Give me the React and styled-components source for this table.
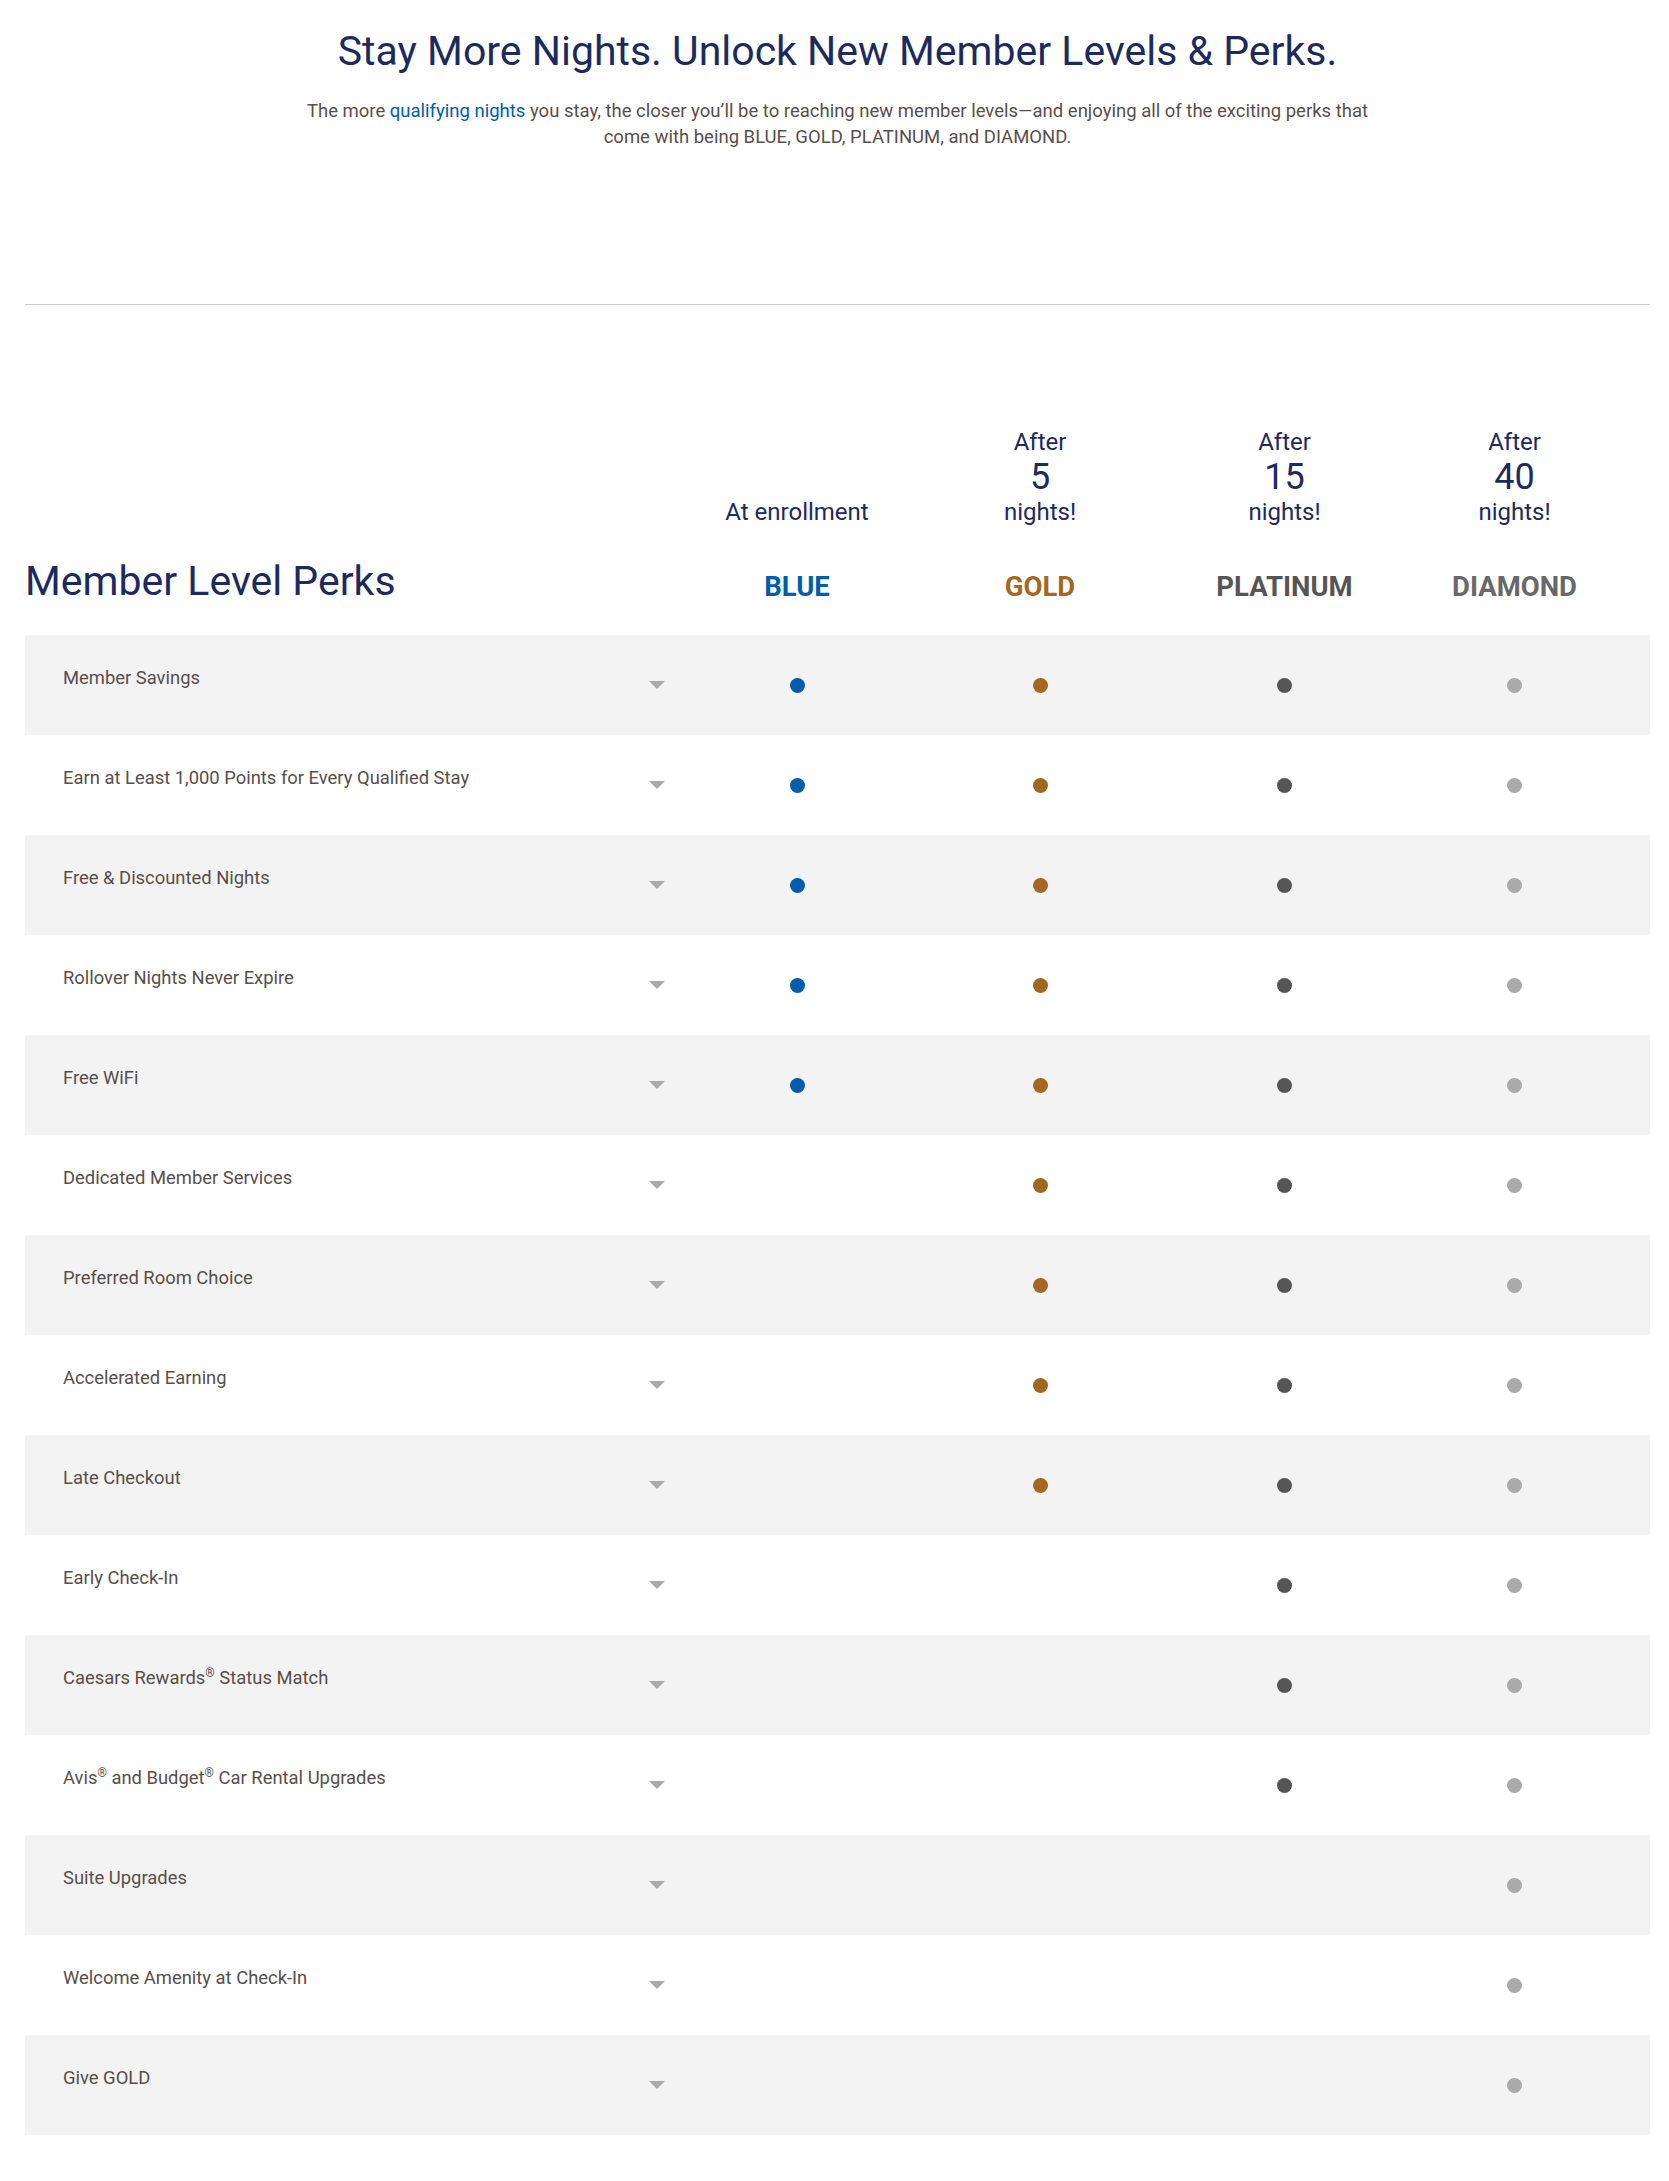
import React from "react";
import styled, { createGlobalStyle } from "styled-components";

const GlobalStyle = createGlobalStyle`
  html, body { margin: 0; padding: 0; background: #ffffff; }
  body { font-family: Roboto, "Open Sans", Arial, sans-serif; }
  * { box-sizing: border-box; }
`;

const NAVY = "#1d2a5e";
const TEXT = "#574f4b";

const Page = styled.div`
  width: 1625px;
  margin-left: 25px;
  padding: 26px 0 46px;
`;

const Intro = styled.header`
  display: flex;
  flex-direction: column;
  align-items: center;
  text-align: center;
`;

const Title = styled.h1`
  margin: 0;
  font-size: 41px;
  line-height: 50px;
  font-weight: 400;
  color: ${NAVY};
`;

const Lead = styled.p`
  margin: 22px 0 0;
  font-size: 18.5px;
  line-height: 26px;
  color: ${TEXT};
`;

const Link = styled.a`
  color: #005eac;
  text-decoration: none;
`;

const Divider = styled.hr`
  margin: 154px 0 0;
  border: 0;
  border-top: 1px solid #cccccc;
  height: 0;
`;

const COLS = "651px 242px 244px 245px 215px";

const HeaderGrid = styled.div`
  display: grid;
  grid-template-columns: ${COLS};
  padding-right: 28px;
  margin-top: 122px;
  padding-bottom: 31px;
  align-items: end;
`;

const SectionTitle = styled.h2`
  margin: 0;
  font-size: 41px;
  line-height: 46px;
  font-weight: 400;
  color: ${NAVY};
`;

const TierHead = styled.div`
  display: flex;
  flex-direction: column;
  align-items: center;
  color: ${NAVY};
`;

const HeadLine = styled.div`
  font-size: 24px;
  line-height: 30px;
`;

const Nights = styled.div`
  font-size: 36px;
  line-height: 40px;
`;

const TierName = styled.div`
  margin-top: 43px;
  font-size: 27.5px;
  line-height: 34px;
  font-weight: 700;
  color: ${(p) => p.$color};
`;

const Rows = styled.div`
  display: flex;
  flex-direction: column;
`;

const Row = styled.div`
  display: grid;
  grid-template-columns: ${COLS};
  padding-right: 28px;
  height: 100px;
  align-items: center;
  background: ${(p) => (p.$shaded ? "#f3f3f3" : "#ffffff")};
`;

const LabelCell = styled.div`
  height: 100%;
  display: flex;
  justify-content: space-between;
  align-items: center;
  padding: 0 11px 0 38px;
`;

const Label = styled.div`
  align-self: flex-start;
  padding-top: 31px;
  font-size: 18.4px;
  line-height: 24px;
  color: ${TEXT};

  sup {
    font-size: 12px;
    line-height: 0;
    vertical-align: 0;
    position: relative;
    top: -7px;
  }
`;

const Chevron = styled.svg`
  width: 16px;
  height: 8px;
  display: block;
  flex: none;
`;

const DotCell = styled.div`
  display: flex;
  justify-content: center;
`;

const Dot = styled.span`
  width: 15px;
  height: 15px;
  border-radius: 50%;
  background: ${(p) => p.$color};
  display: block;
`;

const tiers = [
  { name: "BLUE", color: "#005eac", dot: "#005eac", enroll: true },
  { name: "GOLD", color: "#a3671f", dot: "#a3671f", nights: 5 },
  { name: "PLATINUM", color: "#555555", dot: "#555555", nights: 15 },
  { name: "DIAMOND", color: "#686868", dot: "#aaaaaa", nights: 40 },
];

const perks = [
  { label: "Member Savings", from: 0 },
  { label: "Earn at Least 1,000 Points for Every Qualified Stay", from: 0 },
  { label: "Free & Discounted Nights", from: 0 },
  { label: "Rollover Nights Never Expire", from: 0 },
  { label: "Free WiFi", from: 0 },
  { label: "Dedicated Member Services", from: 1 },
  { label: "Preferred Room Choice", from: 1 },
  { label: "Accelerated Earning", from: 1 },
  { label: "Late Checkout", from: 1 },
  { label: "Early Check-In", from: 2 },
  {
    label: (
      <>
        Caesars Rewards<sup>®</sup> Status Match
      </>
    ),
    from: 2,
  },
  {
    label: (
      <>
        Avis<sup>®</sup> and Budget<sup>®</sup> Car Rental Upgrades
      </>
    ),
    from: 2,
  },
  { label: "Suite Upgrades", from: 3 },
  { label: "Welcome Amenity at Check-In", from: 3 },
  { label: "Give GOLD", from: 3 },
];

function ChevronDown() {
  return (
    <Chevron viewBox="0 0 16 8" aria-hidden="true">
      <polygon points="0,0 16,0 8,8" fill="#aaaaaa" />
    </Chevron>
  );
}

export default function App() {
  return (
    <>
      <GlobalStyle />
      <Page>
        <Intro>
          <Title>Stay More Nights. Unlock New Member Levels &amp; Perks.</Title>
          <Lead>
            The more <Link href="#">qualifying nights</Link> you stay, the closer
            you’ll be to reaching new member levels—and enjoying all of the
            exciting perks that
            <br />
            come with being BLUE, GOLD, PLATINUM, and DIAMOND.
          </Lead>
        </Intro>
        <Divider />
        <HeaderGrid>
          <SectionTitle>Member Level Perks</SectionTitle>
          {tiers.map((t) => (
            <TierHead key={t.name}>
              {t.enroll ? (
                <HeadLine>At enrollment</HeadLine>
              ) : (
                <>
                  <HeadLine>After</HeadLine>
                  <Nights>{t.nights}</Nights>
                  <HeadLine>nights!</HeadLine>
                </>
              )}
              <TierName $color={t.color}>{t.name}</TierName>
            </TierHead>
          ))}
        </HeaderGrid>
        <Rows>
          {perks.map((p, i) => (
            <Row key={i} $shaded={i % 2 === 0}>
              <LabelCell>
                <Label>{p.label}</Label>
                <ChevronDown />
              </LabelCell>
              {tiers.map((t, ti) => (
                <DotCell key={t.name}>
                  {ti >= p.from ? <Dot $color={t.dot} /> : null}
                </DotCell>
              ))}
            </Row>
          ))}
        </Rows>
      </Page>
    </>
  );
}
